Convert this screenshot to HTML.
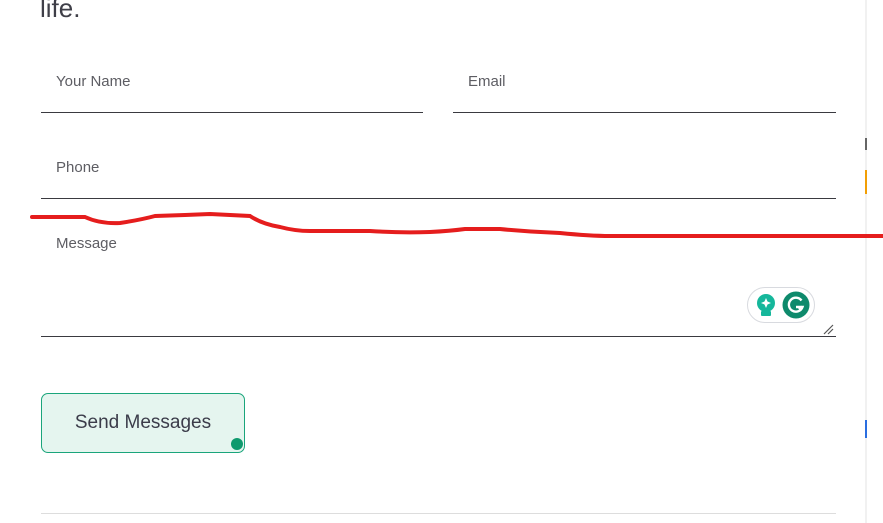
<!DOCTYPE html>
<html><head><meta charset="utf-8"><style>
body{margin:0;width:883px;height:523px;background:#fff;position:relative;overflow:hidden;font-family:"Liberation Sans",sans-serif;color:#555}
.a{position:absolute}
.lbl{position:absolute;font-size:15px;color:#5d5d63}
.ln{position:absolute;height:1px;background:#3a3a40}
</style></head><body>
<div class="a" style="left:40px;top:-7px;font-size:26px;color:#3f3f48">life.</div>
<div class="lbl" style="left:56px;top:73px">Your Name</div>
<div class="ln" style="left:41px;top:112px;width:382px"></div>
<div class="lbl" style="left:468px;top:73px">Email</div>
<div class="ln" style="left:453px;top:112px;width:383px"></div>
<div class="lbl" style="left:56px;top:159px">Phone</div>
<div class="ln" style="left:41px;top:198px;width:795px"></div>
<div class="lbl" style="left:56px;top:235px">Message</div>
<div class="ln" style="left:41px;top:336px;width:795px"></div>
<svg class="a" style="left:822px;top:323px" width="12" height="12"><path d="M2 11L11 2M6 11L11 6" stroke="#555" stroke-width="1.2"/></svg>
<div class="a" style="left:747px;top:287px;width:66px;height:34px;border:1.5px solid #d8dadf;border-radius:18px;background:#fff"></div>
<svg class="a" style="left:755px;top:293px" width="22" height="26"><circle cx="11" cy="10" r="9" fill="#15b79b"/><rect x="6" y="18" width="10" height="5" rx="1" fill="#15b79b"/><path d="M11 5L12.5 8.5L16 10L12.5 11.5L11 15L9.5 11.5L6 10L9.5 8.5Z" fill="#fff"/></svg>
<svg class="a" style="left:782px;top:291px" width="28" height="28"><circle cx="14" cy="14" r="13.5" fill="#0e8a6c"/><path d="M19.5 9.5A7 7 0 1 0 20.5 16H14" stroke="#fff" stroke-width="2.4" fill="none"/><path d="M17 18.5L20 15.5" stroke="#fff" stroke-width="2.4"/></svg>
<div class="a" style="left:41px;top:393px;width:204px;height:60px;border:1px solid #1aa57b;border-radius:7px;background:#e5f5ef;box-sizing:border-box;font-size:19px;color:#3b3c4a;text-align:center;line-height:58px">Send Messages</div>
<div class="a" style="left:231px;top:438px;width:12px;height:12px;border-radius:50%;background:#0f9a6e"></div>
<div class="a" style="left:41px;top:513px;width:795px;height:1px;background:#ddd"></div>
<div class="a" style="left:865px;top:0;width:2px;height:523px;background:#f1f1f1"></div>
<div class="a" style="left:865px;top:138px;width:2px;height:12px;background:#666"></div>
<div class="a" style="left:865px;top:170px;width:2px;height:24px;background:#f29f05"></div>
<div class="a" style="left:865px;top:420px;width:2px;height:18px;background:#2a6ee0"></div>
<svg class="a" style="left:0;top:0" width="883" height="523"><path d="M32 217L85 217Q100 224 120 223Q140 220 155 216L185 215L210 214L250 216Q262 224 280 227Q295 231 310 231L370 231Q400 233 430 232Q450 231 465 229L500 229Q530 232 560 233Q590 236 610 236L883 236" stroke="#e51d1d" stroke-width="4" fill="none" stroke-linecap="round"/></svg>
</body></html>
